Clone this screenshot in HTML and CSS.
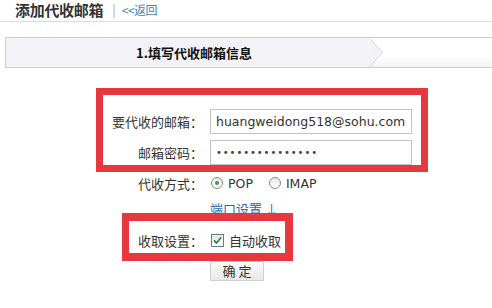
FILE: index.html
```html
<!DOCTYPE html>
<html lang="zh-CN">

<head>
    <meta charset="UTF-8">
    <title>添加代收邮箱</title>
    <link rel="stylesheet" href="styles.css">
</head>

<body>
    <!-- 标题 -->
    <div class="page-head">
        <h1 class="page-title">添加代收邮箱</h1>
        <span class="sep">|</span>
        <a class="back-link" href="#">&lt;&lt;返回</a>
    </div>

    <!-- 步骤条 -->
    <div class="steps">
        <div class="step-active">1.填写代收邮箱信息</div>
        <svg class="step-arrow" width="16" height="31" viewBox="0 0 16 31">
            <polygon points="0,0 1,0 15,15.5 1,31 0,31" fill="#f2f2f7" />
            <polyline points="1,0 15,15.5 1,31" fill="none" stroke="#d6d6d6" stroke-width="1" />
        </svg>
        <div class="step-rest"></div>
    </div>

    <!-- 表单 -->
    <div class="form-wrap">
        <div class="row row-first">
            <label class="label">要代收的邮箱：</label>
            <input class="text-input" type="text" value="huangweidong518@sohu.com">
        </div>
        <div class="row row-pass">
            <label class="label">邮箱密码：</label>
            <input class="text-input" type="password" value="abcdefghijklmno">
        </div>
        <div class="row row-mode">
            <span class="label">代收方式：</span>
            <span class="radio checked"></span><span class="opt">POP</span>
            <span class="radio"></span><span class="opt">IMAP</span>
        </div>
        <div class="row row-port">
            <span class="label"></span>
            <a class="port-link" href="#">端口设置 ↓</a>
        </div>
        <div class="row row-fetch">
            <span class="label">收取设置：</span>
            <span class="checkbox">
                <svg width="9" height="9" viewBox="0 0 9 9">
                    <path d="M1 4.5 L3.5 7 L8 1.5" fill="none" stroke="#2f8a3c" stroke-width="1.8" />
                </svg>
            </span>
            <span class="opt">自动收取</span>
        </div>
        <div class="row row-btn">
            <span class="label"></span>
            <button class="btn">确 定</button>
        </div>

        <!-- 红框标注 -->
        <div class="mark mark-account"></div>
        <div class="mark mark-fetch"></div>
    </div>
</body>

</html>
```

FILE: styles.css
```css
* {
    box-sizing: border-box;
    margin: 0;
    padding: 0;
}

body {
    font-family: "Noto Sans CJK SC", "DejaVu Sans", sans-serif;
    font-size: 13px;
    color: #333;
    background-color: #fff;
    width: 492px;
    height: 308px;
    overflow: hidden;
}

a {
    text-decoration: none;
}

.page-head {
    height: 22px;
    border-bottom: 1px solid #dcdcdc;
    display: flex;
    align-items: flex-start;
    padding-left: 15px;
}

.page-title {
    font-size: 15px;
    font-weight: bold;
    color: #333;
    line-height: 16px;
    letter-spacing: -0.3px;
    margin-top: 2px;
}

.sep {
    color: #aaa;
    font-size: 13px;
    line-height: 14px;
    margin: 3px 6px 0 9px;
}

.back-link {
    color: #3a88b5;
    font-size: 12px;
    line-height: 14px;
    letter-spacing: -0.5px;
    margin-top: 3px;
}

.steps {
    margin: 15px 0 0 5px;
    height: 31px;
    display: flex;
}

.step-active {
    width: 363px;
    background-color: #f2f2f7;
    border: 1px solid #cdcdcd;
    border-right: none;
    font-weight: bold;
    font-size: 13px;
    color: #111;
    line-height: 29px;
    padding-left: 130px;
}

.step-arrow {
    display: block;
    flex: none;
    background: linear-gradient(#fff 60%, #f3f3f3);
    border-top: 1px solid #cdcdcd;
    border-bottom: 1px solid #cdcdcd;
    height: 31px;
}

.step-rest {
    flex: 1;
    border-top: 1px solid #cdcdcd;
    border-bottom: 1px solid #cdcdcd;
    background: linear-gradient(#fff 60%, #f3f3f3);
}

.form-wrap {
    position: relative;
    padding-top: 41px;
}

.row {
    display: flex;
    align-items: center;
}

.label {
    width: 210px;
    flex: none;
    text-align: right;
    padding-right: 7px;
    color: #333;
}

.row-first {
    height: 25px;
}

.row-pass {
    margin-top: 6px;
    height: 25px;
}

.row-mode {
    margin-top: 9px;
    height: 18px;
}

.row-port {
    margin-top: 7px;
    height: 18px;
}

.row-fetch {
    margin-top: 14px;
    height: 18px;
}

.row-btn {
    margin-top: 12px;
    height: 20px;
}

.text-input {
    width: 202px;
    height: 25px;
    border: 1px solid #c3c3c3;
    padding: 0 5px;
    font-family: "DejaVu Sans", sans-serif;
    font-size: 12.5px;
    color: #333;
    outline: none;
}

.text-input[type="password"] {
    font-size: 10px;
    letter-spacing: 0.9px;
    color: #444;
}

.radio {
    width: 12px;
    height: 12px;
    border: 1px solid #8a8a8a;
    border-radius: 50%;
    background: linear-gradient(#e8e8e8, #fff);
    margin-left: 1px;
    position: relative;
    flex: none;
}

.radio.checked::after {
    content: "";
    position: absolute;
    left: 3px;
    top: 3px;
    width: 4px;
    height: 4px;
    border-radius: 50%;
    background-color: #3aa04a;
}

.opt {
    margin-left: 5px;
    margin-right: 15px;
    font-family: "DejaVu Sans", "Noto Sans CJK SC", sans-serif;
    font-size: 12.5px;
    color: #333;
}

.row-fetch .opt {
    font-family: "Noto Sans CJK SC", sans-serif;
    font-size: 13px;
}

.port-link {
    color: #2e62ad;
    font-size: 13px;
}

.checkbox {
    width: 13px;
    height: 13px;
    border: 1px solid #6b7b8b;
    background: linear-gradient(#e6e6e6, #fff);
    display: flex;
    align-items: center;
    justify-content: center;
    flex: none;
    margin-left: 1px;
}

.btn {
    width: 54px;
    height: 20px;
    border: 1px solid #d0d0d0;
    background: linear-gradient(#fafafa, #e8e8e8);
    font-family: "Noto Sans CJK SC", sans-serif;
    font-size: 13px;
    color: #333;
    line-height: 18px;
}

.mark {
    position: absolute;
    border: 7px solid #e8383d;
}

.mark-account {
    left: 96px;
    top: 20px;
    width: 332px;
    height: 84px;
}

.mark-fetch {
    left: 122px;
    top: 145px;
    width: 171px;
    height: 48px;
    border-width: 8px 8px 8px 7px;
}
```
